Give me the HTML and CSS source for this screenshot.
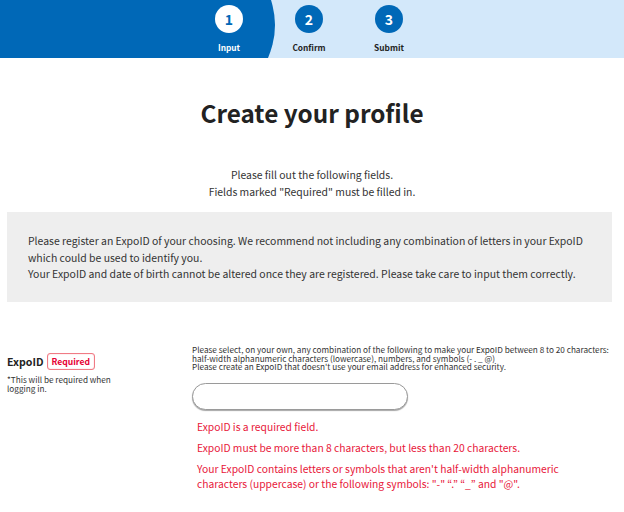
FILE: index.html
```html
<!DOCTYPE html>
<html lang="en">
<head>
<meta charset="utf-8">
<title>Create your profile</title>
<link rel="stylesheet" href="styles.css">
</head>
<body>
<header class="steps-bar">
  <ol class="steps">
    <li class="step step-current"><span class="step-num">1</span><span class="step-label">Input</span></li>
    <li class="step"><span class="step-num">2</span><span class="step-label">Confirm</span></li>
    <li class="step"><span class="step-num">3</span><span class="step-label">Submit</span></li>
  </ol>
</header>
<main class="page">
  <h1 class="title">Create your profile</h1>
  <p class="lead">Please fill out the following fields.<br>Fields marked "Required" must be filled in.</p>
  <div class="notice">
    <p>Please register an ExpoID of your choosing. We recommend not including any combination of letters in your ExpoID which could be used to identify you.<br>Your ExpoID and date of birth cannot be altered once they are registered. Please take care to input them correctly.</p>
  </div>
  <section class="field-row">
    <div class="field-label">
      <div class="label-line"><span class="label-text">ExpoID</span><span class="badge">Required</span></div>
      <p class="label-note">*This will be required when logging in.</p>
    </div>
    <div class="field-body">
      <p class="hint">Please select, on your own, any combination of the following to make your ExpoID between 8 to 20 characters:<br>half-width alphanumeric characters (lowercase), numbers, and symbols (- . _ @)<br>Please create an ExpoID that doesn't use your email address for enhanced security.</p>
      <input class="text-input" type="text" aria-label="ExpoID">
      <ul class="errors">
        <li>ExpoID is a required field.</li>
        <li>ExpoID must be more than 8 characters, but less than 20 characters.</li>
        <li>Your ExpoID contains letters or symbols that aren't half-width alphanumeric characters (uppercase) or the following symbols: "-" “.” “_” and "@".</li>
      </ul>
    </div>
  </section>
</main>
</body>
</html>
```

FILE: styles.css
```css
* { box-sizing: border-box; }
html, body { margin: 0; padding: 0; }
body {
  font-family: "Noto Sans CJK JP", "Noto Sans", sans-serif;
  color: #333;
  background: #fff;
  width: 624px;
  overflow: hidden;
}
.steps-bar {
  position: relative;
  height: 58px;
  background: #d3e8fa;
  overflow: hidden;
}
.steps-bar::before {
  content: "";
  position: absolute;
  left: -749px;
  top: -175px;
  width: 1024px;
  height: 400px;
  border-radius: 50%;
  background: #0068b7;
}
.steps {
  position: relative;
  display: flex;
  margin: 0;
  padding: 0 0 0 189px;
  list-style: none;
}
.step {
  width: 80px;
  display: flex;
  flex-direction: column;
  align-items: center;
}
.step-num {
  margin-top: 5px;
  width: 28px;
  height: 28px;
  border-radius: 50%;
  background: #0068b7;
  color: #fff;
  font-weight: 700;
  font-size: 14px;
  line-height: 28px;
  text-align: center;
}
.step-label {
  margin-top: 8px;
  font-size: 8.3px;
  font-weight: 700;
  line-height: 12px;
  color: #222;
}
.step-current .step-num { background: #fff; color: #0068b7; }
.step-current .step-label { color: #fff; }

.page { padding: 0; }
.title {
  margin: 36px 0 0;
  text-align: center;
  font-size: 24.3px;
  line-height: 38px;
  font-weight: 700;
  color: #222;
}
.lead {
  margin: 34px 0 0;
  text-align: center;
  font-size: 10.4px;
  line-height: 17px;
  color: #333;
}
.notice {
  margin: 12px 12px 0 7px;
  height: 90px;
  background: #eee;
  padding: 21px 20px 0 21px;
}
.notice p {
  margin: 0;
  font-size: 10.45px;
  line-height: 16.5px;
  color: #333;
}
.field-row {
  display: flex;
  margin-top: 42px;
}
.field-label {
  width: 192px;
  padding: 9px 0 0 7px;
}
.label-line {
  display: flex;
  align-items: center;
  gap: 3px;
}
.label-text {
  font-size: 10.6px;
  font-weight: 700;
  color: #222;
}
.badge {
  display: inline-block;
  height: 17px;
  padding: 0 4px;
  border: 1px solid #f07b85;
  border-radius: 3px;
  box-shadow: inset 0 0 1px #f07b85;
  color: #e60033;
  font-size: 8.6px;
  font-weight: 700;
  line-height: 15px;
}
.label-note {
  margin: 5px 0 0;
  width: 108px;
  font-size: 8.2px;
  line-height: 8.5px;
  color: #333;
}
.field-body {
  flex: 1;
  padding-top: 1px;
}
.hint {
  margin: 0;
  font-size: 8.2px;
  line-height: 8.7px;
  color: #333;
  white-space: nowrap;
}
.text-input {
  display: block;
  margin-top: 12px;
  width: 216px;
  height: 27px;
  border: 1px solid #9a9a9a;
  border-radius: 14px;
  box-shadow: 0 1px 1px rgba(0,0,0,.35);
  background: #fff;
  padding: 0 12px;
  font: inherit;
}
.errors {
  margin: 9px 0 0;
  padding: 0 0 0 5px;
  list-style: none;
  width: 400px;
  color: #e8173a;
  font-size: 10.3px;
  line-height: 15px;
}
.errors li { margin-bottom: 6px; }
```
